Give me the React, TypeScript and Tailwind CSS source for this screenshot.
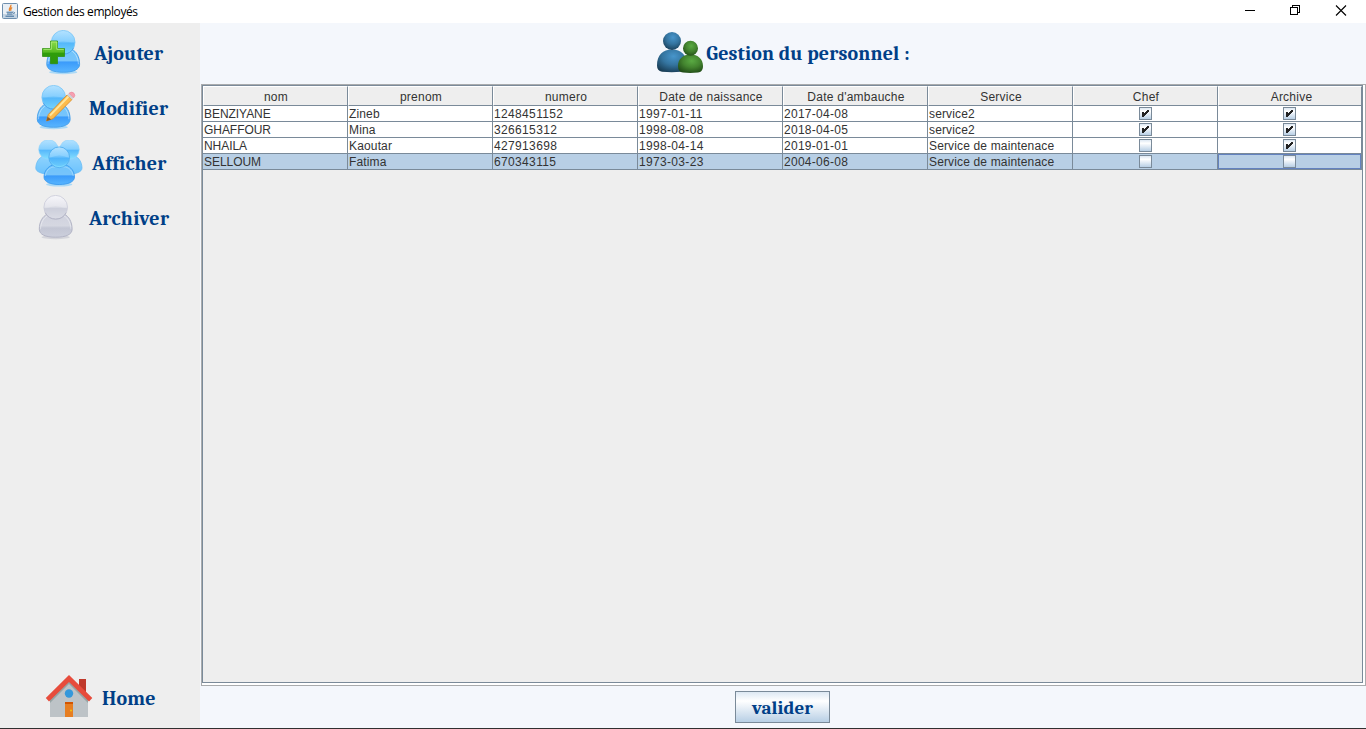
import React from 'react';

type Row = { cells: string[]; chef: boolean; archive: boolean };

const columns = ['nom', 'prenom', 'numero', 'Date de naissance', "Date d'ambauche", 'Service', 'Chef', 'Archive'];

const columnTracking = [
  'tracking-[-0.05px]',
  'tracking-[0.15px]',
  'tracking-[0.35px]',
  'tracking-[0.33px]',
  'tracking-[0.27px]',
  'tracking-[0.15px]',
];

const rows: Row[] = [
  { cells: ['BENZIYANE', 'Zineb', '1248451152', '1997-01-11', '2017-04-08', 'service2'], chef: true, archive: true },
  { cells: ['GHAFFOUR', 'Mina', '326615312', '1998-08-08', '2018-04-05', 'service2'], chef: true, archive: true },
  { cells: ['NHAILA', 'Kaoutar', '427913698', '1998-04-14', '2019-01-01', 'Service de maintenace'], chef: false, archive: true },
  { cells: ['SELLOUM', 'Fatima', '670343115', '1973-03-23', '2004-06-08', 'Service de maintenace'], chef: false, archive: false },
];

const serif = 'font-["Cambria","Caladea","Noto_Serif","DejaVu_Serif_Condensed","DejaVu_Serif",serif] font-bold text-[#003f87] whitespace-nowrap leading-none';

function Gradients() {
  return (
    <svg className="absolute size-0" aria-hidden="true">
      <defs>
        <linearGradient id="blueHead" x1="0" y1="0" x2="0" y2="1">
          <stop offset="0" stopColor="#b4e2ff" />
          <stop offset=".48" stopColor="#86cffe" />
          <stop offset=".54" stopColor="#57b8fb" />
          <stop offset="1" stopColor="#86e0ff" />
        </linearGradient>
        <linearGradient id="blueBody" x1="0" y1="0" x2="0" y2="1">
          <stop offset="0" stopColor="#6fc4fb" />
          <stop offset=".5" stopColor="#77c4fb" />
          <stop offset=".56" stopColor="#3b9bfa" />
          <stop offset="1" stopColor="#58b5ff" />
        </linearGradient>
        <linearGradient id="paleBody" x1="0" y1="0" x2="0" y2="1">
          <stop offset="0" stopColor="#8fd3fd" />
          <stop offset="1" stopColor="#6bc2fd" />
        </linearGradient>
        <linearGradient id="grayHead" x1="0" y1="0" x2="0" y2="1">
          <stop offset="0" stopColor="#f6f6fa" />
          <stop offset=".5" stopColor="#e4e5ec" />
          <stop offset=".55" stopColor="#cfd1dd" />
          <stop offset="1" stopColor="#e3e4ec" />
        </linearGradient>
        <linearGradient id="grayBody" x1="0" y1="0" x2="0" y2="1">
          <stop offset="0" stopColor="#d0d2de" />
          <stop offset=".5" stopColor="#d5d7e1" />
          <stop offset=".6" stopColor="#c3c6d4" />
          <stop offset="1" stopColor="#cccfdc" />
        </linearGradient>
        <linearGradient id="plus" x1="0" y1="0" x2="0" y2="1">
          <stop offset="0" stopColor="#8bdc4b" />
          <stop offset=".48" stopColor="#58bb22" />
          <stop offset=".55" stopColor="#2f9d0b" />
          <stop offset="1" stopColor="#2f960c" />
        </linearGradient>
        <radialGradient id="teamBlue" cx=".55" cy=".3" r=".75">
          <stop offset="0" stopColor="#4795cb" />
          <stop offset=".5" stopColor="#34749f" />
          <stop offset="1" stopColor="#183c54" />
        </radialGradient>
        <radialGradient id="teamGreen" cx=".55" cy=".35" r=".7">
          <stop offset="0" stopColor="#5aaa43" />
          <stop offset=".5" stopColor="#43842f" />
          <stop offset="1" stopColor="#214b17" />
        </radialGradient>
      </defs>
    </svg>
  );
}

function Person({ x = 0, y = 0, tone = 'blue' }: { x?: number; y?: number; tone?: 'blue' | 'gray' }) {
  const gray = tone === 'gray';
  const edge = gray ? '#b3b5c6' : '#4ba3ec';
  return (
    <g transform={`translate(${x} ${y})`}>
      <ellipse cx="17" cy="42" rx="14" ry="2" fill={gray ? '#c9cad3' : '#8fd0fa'} opacity=".7" />
      <path d="M.6 34C.6 26.500 4 21 8.500 19H25.500C30 21 33.400 26.500 33.400 34C33.400 39.500 27 42 17 42S.6 39.500 .6 34Z" fill={gray ? 'url(#grayBody)' : 'url(#blueBody)'} stroke={edge} strokeWidth="1" />
      <path d="M1.800 34C2 27.500 5 22.500 9 20.500H25C29 22.500 32 27.500 32.200 34" fill="none" stroke="#fff" strokeOpacity=".4" />
      <circle cx="17" cy="12" r="11.800" fill={gray ? 'url(#grayHead)' : 'url(#blueHead)'} stroke={gray ? '#c9cad8' : '#79c5f6'} strokeWidth=".8" />
      <path d="M6 14Q17 8 28 14A11.200 11.200 0 0 1 6 14Z" fill={gray ? '#c8cad7' : '#4eb5fa'} opacity=".3" />
      <path d="M6.500 17.500A11.800 11.800 0 0 0 27.500 17.500" fill="none" stroke={edge} strokeWidth="1" />
    </g>
  );
}

function AddIcon() {
  return (
    <svg width="48" height="48" viewBox="0 0 48 48">
      <Person x={7.2} y={.2} />
      <path d="M11.500 11h7v7.500h7v8H18.500v7.200h-7V26.500H3.500v-8h8z" fill="url(#plus)" stroke="#2f8f12" strokeWidth=".8" strokeLinejoin="round" />
      <path d="M12.300 19.300V12h5.500v7.300h7M4.500 19.300h7.800" fill="none" stroke="#b5ef84" strokeWidth=".8" />
    </svg>
  );
}

function EditIcon() {
  return (
    <svg width="48" height="48" viewBox="0 0 48 48">
      <Person x={2.7} y={.2} />
      <path d="M12.500 36L14.300 29.500L33 10L38 14.500L19 33.700Z" fill="#fdbb4c" stroke="#d78822" strokeWidth=".8" />
      <path d="M16 30.500L34.500 11.500" stroke="#ffe59b" strokeWidth="1.800" />
      <path d="M12.500 36L13.600 31.800L17.200 34.500Z" fill="#8a5c2a" />
      <path d="M33 10L35 8.200L39.600 12.800L38 14.500Z" fill="#cfd2d8" />
      <path d="M35 8.200Q38 6 40 8.200Q42 10.500 39.600 12.800Z" fill="#f79fb0" stroke="#e77f93" strokeWidth=".5" />
    </svg>
  );
}

function GroupIcon() {
  return (
    <svg width="48" height="48" viewBox="0 0 48 48">
      {[0, 20].map((dx) => (
        <g key={dx} transform={`translate(${dx} 0)`}>
          <path d="M.8 28C1 22 4 18 8 16H20C24 18 26.800 22 27 28C27 32 21 34 14 34S.8 32 .8 28Z" fill="url(#paleBody)" stroke="#69bcf5" strokeWidth=".8" />
          <circle cx={dx ? 14.5 : 13.5} cy="9.500" r="9.800" fill="url(#blueHead)" stroke="#94d4fa" strokeWidth=".6" />
        </g>
      ))}
      <ellipse cx="24.200" cy="44.500" rx="13" ry="2" fill="#8fd0fa" opacity=".7" />
      <path d="M9 37C9.200 31 12.500 27 17.500 25H31C36 27 39.300 31 39.500 37C39.500 42 33 44.500 24.200 44.500S9 42 9 37Z" fill="url(#blueBody)" stroke="#3396ee" strokeWidth=".8" />
      <path d="M10.300 36C11 31 14 28 18 27H30.500C34.500 28 37.500 31 38.200 36" fill="none" stroke="#b8e3ff" strokeOpacity=".7" strokeWidth=".8" />
      <circle cx="24.200" cy="17.300" r="10.400" fill="url(#blueHead)" stroke="#4ba9ee" strokeWidth=".8" />
      <path d="M14.500 18Q24.200 13 34 18A9.900 9.900 0 0 1 14.500 18Z" fill="#3ca9f8" opacity=".3" />
    </svg>
  );
}

function ArchiveIcon() {
  return (
    <svg width="48" height="48" viewBox="0 0 48 48">
      <Person x={6.7} y={.2} tone="gray" />
    </svg>
  );
}

function HomeIcon() {
  return (
    <svg width="48" height="48" viewBox="0 1 48 48">
      <path d="M34 5h7v15l-7-7z" fill="#c0392b" />
      <path d="M24 7L5 25V43H43V25Z" fill="#bdc3c7" />
      <path d="M24 7L5 25V29L24 10L43 29V25Z" fill="#95a5a6" />
      <path d="M24 1L.8 24L4 27.500L24 8L44 27.500L47.300 24Z" fill="#e74c3c" />
      <circle cx="24" cy="19.500" r="4.200" fill="#3498db" />
      <path d="M20 28h8v15h-8z" fill="#e67e22" />
      <path d="M20 28h8v2h-8z" fill="#d35400" />
      <circle cx="26" cy="36.500" r="1" fill="#f1c40f" />
    </svg>
  );
}

function TeamIcon() {
  return (
    <svg width="48" height="48" viewBox="0 0 48 48">
      <path d="M1 35.500C1 25 7 19.500 16 19.500S31 25 31 35.500C31 39.500 29 41.500 25 41.800Q16 42.700 6 41.800Q1 41 1 35.500Z" fill="url(#teamBlue)" />
      <circle cx="16" cy="11" r="9" fill="url(#teamBlue)" />
      <path d="M22 36C22 29 27 24.500 34.500 24.500S47 29 47 36C47 40 45 42.300 42 42.500Q34 43.300 27 42.500Q22 42 22 36Z" fill="url(#teamGreen)" />
      <circle cx="34.500" cy="18.200" r="7.500" fill="url(#teamGreen)" />
    </svg>
  );
}

function JavaIcon() {
  return (
    <svg className="-mt-px" width="16" height="16" viewBox="0 0 16 16">
      <rect x=".5" y=".5" width="15" height="15" rx="1" fill="#e9eff5" stroke="#6f8fae" />
      <path d="M1 11h14v4H1z" fill="#c3d3e2" />
      <path d="M8.800 1.800C10 4 6 5 7.500 8M10.200 4.500C8 5.500 8.500 6.500 9 7.800" fill="none" stroke="#e8832b" strokeWidth="1.300" />
      <path d="M4.500 9.200h6.500M5 11h5.500M3.500 13.200h8.500M11.500 9q2 .2 0 2" fill="none" stroke="#3c6c98" />
    </svg>
  );
}

function Check({ on }: { on: boolean }) {
  return (
    <span className="block size-[13px] border border-[#7a8a99] bg-linear-to-b from-[#dde8f3] via-white via-30% to-[#b8cfe5]">
      {on && (
        <svg className="block" width="11" height="11" viewBox="0 0 11 11" shapeRendering="crispEdges">
          <path d="M2 4h2v2h1v-1h1v-1h1v-1h1v-1h1v2h-1v1h-1v1h-1v1h-1v1h-1v1h-2z" fill="#222" />
          <path d="M8 2h1v2h-1v1h-1v1h-1v1h-1v1h-1v-3h1v-1h1v-1h1v-1h1z" fill="#222" />
        </svg>
      )}
    </span>
  );
}

function MenuItem({ icon, label, spacing, tracking }: { icon: React.ReactNode; label: string; spacing: string; tracking: string }) {
  return (
    <button className={`flex h-[55px] w-full items-center ${spacing}`}>
      {icon}
      <span className={`${serif} text-[20px] ${tracking}`}>{label}</span>
    </button>
  );
}

function EmployeeTable() {
  return (
    <div className="flex h-[602px] shrink-0 flex-col border border-[#a9abad] bg-white pr-[2px] pb-[2px]">
      <div className="min-h-0 flex-1 border border-[#7a8a99] bg-[#eeeeee]">
        <div className="grid h-5 grid-cols-[repeat(7,145px)_144px] text-center">
          {columns.map((c) => (
            <div key={c} className="h-5 border-t border-r border-b border-l border-t-white border-r-[#7a8a99] border-b-[#7a8a99] border-l-white pl-px leading-[20px] tracking-[0.24px] whitespace-nowrap last:pl-[3px]">
              {c}
            </div>
          ))}
        </div>
        {rows.map((r, i) => {
          const selected = i === rows.length - 1;
          return (
            <div key={r.cells[0]} className={`grid h-4 grid-cols-[repeat(7,145px)_144px] ${selected ? 'bg-[#b8cfe5]' : 'bg-white'}`}>
              {r.cells.map((c, j) => (
                <div key={j} className={`h-4 border-r border-b border-[#7a8a99] pl-px leading-[16px] whitespace-nowrap ${columnTracking[j]}`}>
                  {c}
                </div>
              ))}
              <div className="flex h-4 items-center justify-center border-r border-b border-[#7a8a99]">
                <Check on={r.chef} />
              </div>
              <div className={`flex h-4 items-center justify-center border-r border-b border-[#7a8a99] ${selected ? 'inset-ring inset-ring-[#6382bf]' : ''}`}>
                <Check on={r.archive} />
              </div>
            </div>
          );
        })}
      </div>
    </div>
  );
}

export default function App() {
  return (
    <div className="flex h-[729px] w-[1366px] flex-col overflow-hidden border-b border-[#303030] bg-[#f4f7fc] font-['Liberation_Sans',Arial,sans-serif] text-[12px] text-[#333333]">
      <Gradients />
      <header className="flex h-[23px] shrink-0 items-center bg-white pl-[2px] text-black">
        <JavaIcon />
        <h1 className="ml-[5px] flex-1 font-['Open_Sans','Noto_Sans',sans-serif] text-[12px] tracking-[-0.42px]">Gestion des employés</h1>
        <svg width="126" height="23" viewBox="0 0 126 23" fill="none" stroke="#000" strokeWidth="1">
          <path d="M5 10.500h10M50.500 7.500h7v7h-7zM52.500 7V5.500h7v7H58" shapeRendering="crispEdges" />
          <path d="M96 5.500l10 10M106 5.500l-10 10" strokeWidth="1.100" />
        </svg>
      </header>
      <div className="flex min-h-0 flex-1">
        <nav className="flex w-[200px] shrink-0 flex-col justify-between bg-[#eeeeee] pt-[3px]">
          <div>
            <MenuItem icon={<AddIcon />} label="Ajouter" spacing="pl-[39px] gap-[7px]" tracking="tracking-[0.15px]" />
            <MenuItem icon={<EditIcon />} label="Modifier" spacing="pl-[34px] gap-[7px]" tracking="tracking-[0.25px]" />
            <MenuItem icon={<GroupIcon />} label="Afficher" spacing="pl-[35px] gap-[9px]" tracking="tracking-[0.2px]" />
            <MenuItem icon={<ArchiveIcon />} label="Archiver" spacing="pl-[32px] gap-[9px]" tracking="tracking-[0.35px]" />
          </div>
          <div className="pb-[2px]">
            <MenuItem icon={<HomeIcon />} label="Home" spacing="pl-[45px] gap-[9px]" tracking="tracking-[0.15px]" />
          </div>
        </nav>
        <main className="flex flex-1 flex-col">
          <div className="flex h-[61px] shrink-0 items-center justify-center">
            <TeamIcon />
            <h2 className={`${serif} ml-[2px] text-[20px] tracking-[0.14px]`}>Gestion du personnel :</h2>
          </div>
          <div className="pl-px">
            <EmployeeTable />
          </div>
          <div className="flex justify-center pt-[5px] pr-[2px]">
            <button className={`${serif} h-8 w-[95px] border border-[#7a8a99] bg-linear-to-b from-[#dde8f3] via-white via-30% to-[#b8cfe5] pt-[2px] pl-px text-[19px] tracking-[0.1px]`}>valider</button>
          </div>
        </main>
      </div>
    </div>
  );
}
